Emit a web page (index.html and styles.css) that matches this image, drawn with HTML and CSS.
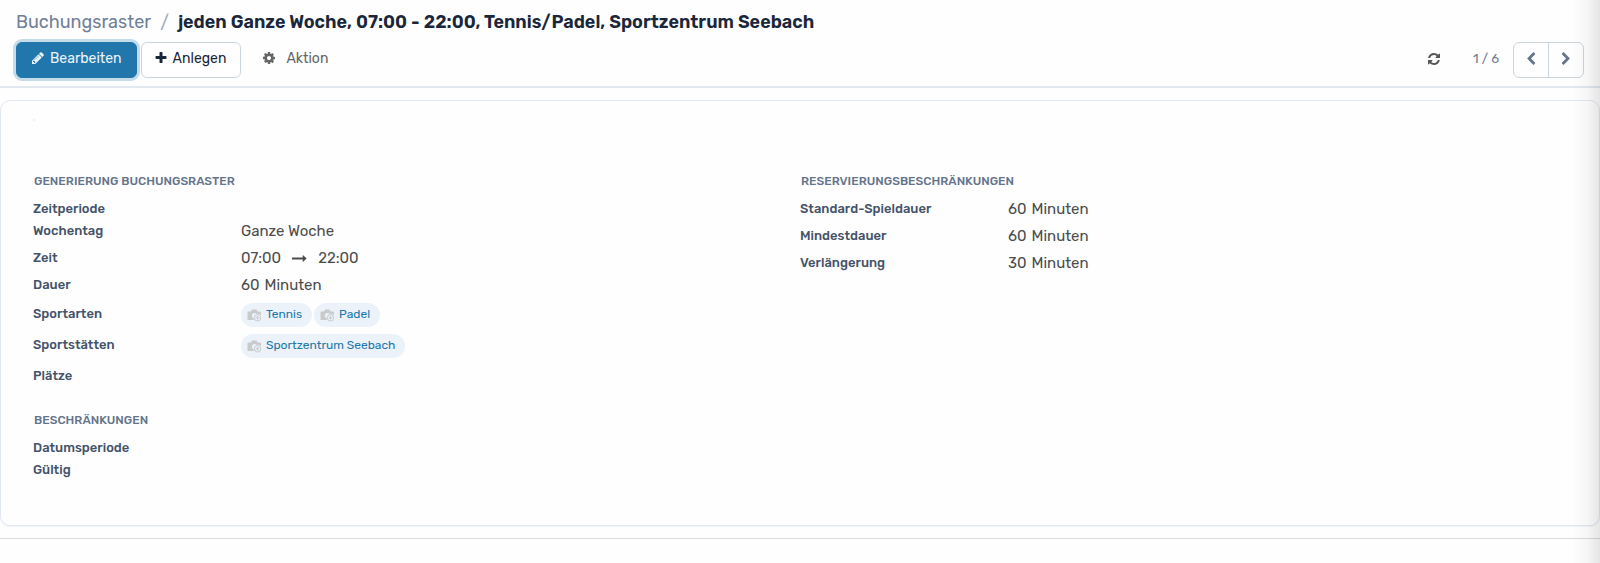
FILE: index.html
```html
<!DOCTYPE html>
<html lang="de">
<head>
    <meta charset="UTF-8">
    <meta name="viewport" content="width=device-width, initial-scale=1.0">
    <title>Buchungsraster</title>
    <link rel="stylesheet" href="styles.css">
</head>
<body>
    <!-- Shared icon -->
    <svg class="symbols" aria-hidden="true">
        <symbol id="camera" viewBox="0 0 15 13">
            <path fill="#c9cacc" d="M1.500 2.500h2.500l1-2h4.500l1 2h2.500q1 0 1 1v7.500h-13.500V3.500q0-1 1-1z"/>
            <circle cx="7.500" cy="6.500" r="2.600" fill="#ebf2f9"/>
            <circle cx="10.500" cy="8.800" r="4" fill="#ebf2f9"/>
            <circle cx="10.500" cy="8.800" r="3.200" fill="none" stroke="#c9cacc" stroke-width="1"/>
            <path stroke="#c9cacc" stroke-width="1" d="M10.500 7v3.600M8.700 8.800h3.600"/>
        </symbol>
    </svg>

    <!-- Control Panel -->
    <header class="control-panel">
        <nav class="breadcrumb">
            <a href="#">Buchungsraster</a>
            <span class="separator">/</span>
            <h1>jeden Ganze Woche, 07:00 - 22:00, Tennis/Padel, Sportzentrum Seebach</h1>
        </nav>
        <div class="toolbar">
            <div class="actions">
                <button class="btn btn-primary" type="button">
                    <svg class="icon" viewBox="0 0 1792 1792"><path d="M491 1536l91-91-235-235-91 91v107h128v128h107zm523-928q0-22-22-22-10 0-17 7l-542 542q-7 7-7 17 0 22 22 22 10 0 17-7l542-542q7-7 7-17zm-54-192l416 416-832 832h-416v-416zm683 96q0 53-37 90l-166 166-416-416 166-165q36-38 90-38 53 0 91 38l235 234q37 39 37 91z"/></svg>
                    Bearbeiten
                </button>
                <button class="btn btn-secondary" type="button">
                    <svg class="icon" viewBox="0 0 1792 1792"><path d="M1600 736v192q0 40-28 68t-68 28h-416v416q0 40-28 68t-68 28h-192q-40 0-68-28t-28-68v-416h-416q-40 0-68-28t-28-68v-192q0-40 28-68t68-28h416v-416q0-40 28-68t68-28h192q40 0 68 28t28 68v416h416q40 0 68 28t28 68z"/></svg>
                    Anlegen
                </button>
                <button class="btn btn-plain" type="button">
                    <svg class="icon" viewBox="0 0 1792 1792"><path d="M1152 896q0-106-75-181t-181-75-181 75-75 181 75 181 181 75 181-75 75-181zm512-109v222q0 12-8 23t-20 13l-185 28q-19 54-39 91 35 50 107 138 10 12 10 25t-9 23q-27 37-99 108t-94 71q-12 0-26-9l-138-108q-44 23-91 38-16 136-29 186-7 28-36 28h-222q-14 0-24.500-8.500t-11.500-21.500l-28-184q-49-16-90-37l-141 107q-10 9-25 9-14 0-25-11-126-114-165-168-7-10-7-23 0-12 8-23 15-21 51-66.500t54-70.500q-27-50-41-99l-183-27q-13-2-21-12.500t-8-23.500v-222q0-12 8-23t19-13l186-28q14-46 39-92-40-57-107-138-10-12-10-24 0-10 9-23 26-36 98.500-107.500t94.500-71.500q13 0 26 10l138 107q44-23 91-38 16-136 29-186 7-28 36-28h222q14 0 24.500 8.500t11.500 21.500l28 184q49 16 90 37l142-107q9-9 24-9 13 0 25 10 129 119 165 170 7 8 7 22 0 12-8 23-15 21-51 66.500t-54 70.500q26 50 41 98l183 28q13 2 21 12.500t8 23.500z"/></svg>
                    Aktion
                </button>
            </div>
            <div class="pager">
                <button class="refresh" type="button" aria-label="Aktualisieren">
                    <svg class="icon" viewBox="0 0 1792 1792"><path d="M1639 1056q0 5-1 7-64 268-268 434.500t-478 166.500q-146 0-282.500-55t-243.500-157l-129 129q-19 19-45 19t-45-19-19-45v-448q0-26 19-45t45-19h448q26 0 45 19t19 45-19 45l-137 137q71 66 161 102t187 36q134 0 250-65t186-179q11-17 53-117 8-23 30-23h192q13 0 22.500 9.500t9.500 22.500zm25-800v448q0 26-19 45t-45 19h-448q-26 0-45-19t-19-45 19-45l138-138q-148-137-349-137-134 0-250 65t-186 179q-11 17-53 117-8 23-30 23h-199q-13 0-22.500-9.500t-9.500-22.500v-7q65-268 270-434.500t480-166.500q146 0 284 55.500t245 156.500l130-129q19-19 45-19t45 19 19 45z"/></svg>
                </button>
                <span class="counter">1 / 6</span>
                <div class="pager-buttons">
                    <button type="button" aria-label="Zurück">
                        <svg class="icon" viewBox="0 0 1792 1792"><path d="M1427 301l-531 531 531 531q19 19 19 45t-19 45l-166 166q-19 19-45 19t-45-19l-742-742q-19-19-19-45t19-45l742-742q19-19 45-19t45 19l166 166q19 19 19 45t-19 45z"/></svg>
                    </button>
                    <button type="button" aria-label="Weiter">
                        <svg class="icon" viewBox="0 0 1792 1792"><path d="M1363 877l-742 742q-19 19-45 19t-45-19l-166-166q-19-19-19-45t19-45l531-531-531-531q-19-19-19-45t19-45l166-166q19-19 45-19t45 19l742 742q19 19 19 45t-19 45z"/></svg>
                    </button>
                </div>
            </div>
        </div>
    </header>

    <!-- Form Sheet -->
    <main class="content">
        <div class="sheet">
            <div class="avatar"></div>
            <div class="columns">
                <div class="column">
                    <section class="group">
                        <h2>Generierung Buchungsraster</h2>
                        <dl>
                            <div class="field"><dt>Zeitperiode</dt><dd></dd></div>
                            <div class="field filled"><dt>Wochentag</dt><dd>Ganze Woche</dd></div>
                            <div class="field filled">
                                <dt>Zeit</dt>
                                <dd class="range">
                                    07:00
                                    <svg class="arrow" viewBox="0 0 1792 1792"><path d="M1728 893q0 14-10 24l-384 354q-16 14-35 6-19-9-19-29v-224h-1248q-14 0-23-9t-9-23v-192q0-14 9-23t23-9h1248v-224q0-21 19-29t35 5l384 350q10 10 10 23z"/></svg>
                                    22:00
                                </dd>
                            </div>
                            <div class="field filled"><dt>Dauer</dt><dd class="amount"><span>60</span><span>Minuten</span></dd></div>
                            <div class="field tagged">
                                <dt>Sportarten</dt>
                                <dd>
                                    <span class="tag"><svg class="camera"><use href="#camera"/></svg>Tennis</span>
                                    <span class="tag"><svg class="camera"><use href="#camera"/></svg>Padel</span>
                                </dd>
                            </div>
                            <div class="field tagged">
                                <dt>Sportstätten</dt>
                                <dd>
                                    <span class="tag"><svg class="camera"><use href="#camera"/></svg>Sportzentrum Seebach</span>
                                </dd>
                            </div>
                            <div class="field tagged"><dt>Plätze</dt><dd></dd></div>
                        </dl>
                    </section>
                    <section class="group">
                        <h2>Beschränkungen</h2>
                        <dl>
                            <div class="field"><dt>Datumsperiode</dt><dd></dd></div>
                            <div class="field"><dt>Gültig</dt><dd></dd></div>
                        </dl>
                    </section>
                </div>
                <div class="column">
                    <section class="group">
                        <h2>Reservierungsbeschränkungen</h2>
                        <dl>
                            <div class="field filled"><dt>Standard-Spieldauer</dt><dd class="amount"><span>60</span><span>Minuten</span></dd></div>
                            <div class="field filled"><dt>Mindestdauer</dt><dd class="amount"><span>60</span><span>Minuten</span></dd></div>
                            <div class="field filled"><dt>Verlängerung</dt><dd class="amount"><span>30</span><span>Minuten</span></dd></div>
                        </dl>
                    </section>
                </div>
            </div>
        </div>
    </main>
</body>
</html>
```
FILE: styles.css
```css
/* CSS Styles */
* {
    box-sizing: border-box;
}

body {
    font-family: Rubik, Roboto, sans-serif;
    margin: 0;
    background: #fefefe;
    color: #4c4c4c;
    font-size: 15px;
    line-height: 22px;
}

/* Shade along the right edge of the window */
body::after {
    content: "";
    position: fixed;
    top: 0;
    right: 0;
    bottom: 0;
    width: 28px;
    background: linear-gradient(to right, rgba(0, 0, 0, 0), rgba(0, 0, 0, 0.03) 55%, rgba(0, 0, 0, 0.1));
    pointer-events: none;
}

h1, h2, dl, dd {
    margin: 0;
}

button {
    font-family: inherit;
    font-size: 14px;
    cursor: pointer;
}

.symbols {
    display: none;
}

.icon {
    width: 14px;
    height: 14px;
    fill: currentColor;
}

/* Control panel */
.control-panel {
    padding: 8px 16px;
    border-bottom: 2px solid #e2e8f0;
}

.breadcrumb {
    display: flex;
    gap: 9px;
    font-size: 18px;
    line-height: 28px;
}

.breadcrumb a {
    color: #718096;
    text-decoration: none;
}

.breadcrumb .separator {
    color: #a0aec0;
}

.breadcrumb h1 {
    font-size: 18px;
    font-weight: 600;
    color: #1a273b;
}

.toolbar {
    display: flex;
    justify-content: space-between;
    margin-top: 6px;
}

.actions {
    display: flex;
    gap: 4px;
}

.btn {
    display: flex;
    align-items: center;
    gap: 5px;
    height: 36px;
    padding: 0 14px 4px;
    border: 1px solid transparent;
    border-radius: 6px;
    background: none;
}

.btn-primary {
    background: #2177ac;
    border-color: #2177ac;
    color: #ebf4fa;
    box-shadow: 0 0 0 3px #c5dcea;
}

.btn-secondary {
    padding: 0 14px 4px 12px;
    background: #fff;
    border-color: #cbd5e0;
    color: #1a273b;
}

.btn-plain {
    gap: 10px;
    padding: 0 16px 4px;
    color: #666;
}

.pager {
    display: flex;
    align-items: center;
}

.refresh {
    display: flex;
    padding: 0 0 2px;
    border: none;
    background: none;
    color: #555;
}

.counter {
    margin: 0 14px 2px 32px;
    font-size: 13px;
    color: #718096;
}

.pager-buttons {
    display: flex;
    height: 36px;
    border: 1px solid #cbd5e0;
    border-radius: 6px;
}

.pager-buttons button {
    display: flex;
    align-items: center;
    justify-content: center;
    width: 34px;
    padding: 0 0 2px;
    border: none;
    background: none;
    color: #64748b;
}

.pager-buttons button + button {
    width: 35px;
    border-left: 1px solid #cbd5e0;
}

/* Form sheet */
.content {
    padding: 12px 0;
    border-bottom: 1px solid #d9dbde;
}

.sheet {
    padding: 18px 32px 44px;
    border: 1px solid #e2e8f0;
    border-radius: 10px;
    box-shadow: 0 1px 1px #f0f2f8;
}

/* Empty image frame above the groups */
.avatar {
    width: 2px;
    height: 2px;
    margin-bottom: 49px;
    background: #eef0f2;
}

.columns {
    display: grid;
    grid-template-columns: 1fr 1fr;
}

.group + .group {
    margin-top: 15px;
}

.group h2 {
    margin-bottom: 6px;
    padding-left: 1px;
    font-size: 12px;
    line-height: 22px;
    font-weight: 500;
    text-transform: uppercase;
    color: #64748b;
}

.field {
    display: grid;
    grid-template-columns: 208px 1fr;
}

.field dt {
    font-size: 13px;
    font-weight: 500;
    color: #44536a;
}

.filled {
    padding-bottom: 5px;
}

.tagged {
    min-height: 31px;
    line-height: 26px;
}

.tagged dd {
    display: flex;
    gap: 2px;
    padding-top: 2px;
}

.range {
    display: flex;
    align-items: center;
    gap: 11px;
}

.arrow {
    width: 15px;
    height: 15px;
    fill: #4c4c4c;
}

.amount {
    display: flex;
    gap: 5px;
}

.tag {
    display: flex;
    align-items: center;
    gap: 4px;
    height: 24px;
    padding: 0 10px 2px 6px;
    border-radius: 12px;
    background: #ebf2f9;
    font-size: 12px;
    line-height: 22px;
    color: #2177ac;
}

.camera {
    width: 15px;
    height: 13px;
    margin-top: 2px;
}
```
